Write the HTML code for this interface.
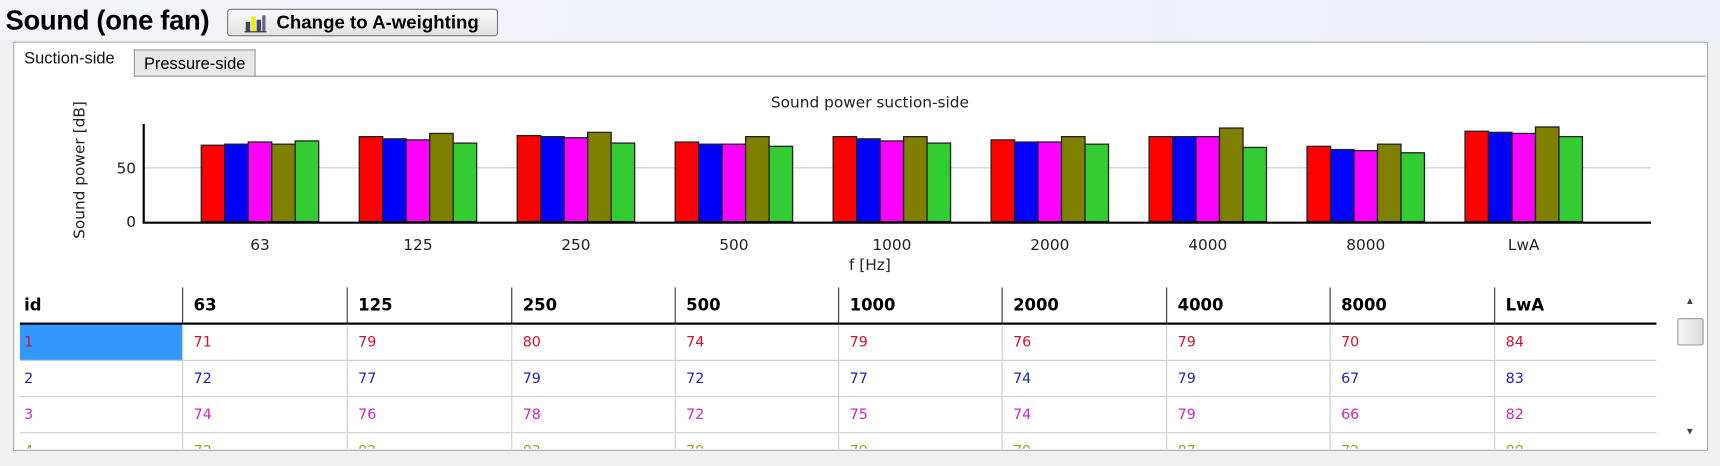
<!DOCTYPE html>
<html><head><meta charset="utf-8"><style>
html,body{margin:0;padding:0;width:1720px;height:466px;overflow:hidden;background:#f0f0f0;font-family:"Liberation Sans",sans-serif}
#w{position:absolute;left:0;top:0;width:1568px;height:425px;transform:scale(1.097);transform-origin:0 0}
.a{position:absolute}
.hdr{left:0;top:0;width:1568px;height:36px;background:linear-gradient(90deg,#f4f4f8 0%,#eceefa 100%)}
.title{left:5px;top:5px;font-size:25px;font-weight:bold;color:#000;letter-spacing:-0.3px}
.btn{left:207px;top:8px;width:245px;height:23px;border:1px solid #777;border-radius:3px;background:linear-gradient(#fafafa,#e2e2e2);font-size:17px;font-weight:bold;line-height:24px}
.panel{left:12px;top:38px;width:1543px;height:371px;background:#fff;border:1px solid #a8a8a8}
.tab1{left:22px;top:45px;font-size:15px;color:#111}
.tab2{left:122px;top:45px;width:109px;height:24px;background:#e8e8e8;border:1px solid #999;border-bottom:none;font-size:15px;line-height:26px;text-align:center}
.tline{left:122px;top:69px;width:1433px;height:1px;background:#999}
.clip{left:18px;top:262px;width:1492px;height:147px;overflow:hidden}
table{position:absolute;left:0;top:0;border-collapse:collapse;font-family:"DejaVu Sans","Liberation Sans",sans-serif;table-layout:fixed;width:1492px}
th{height:32px;text-align:left;font-size:15px;font-weight:bold;padding:0 0 0 10px;border-bottom:2px solid #000;border-left:1px solid #333}
th:first-child{border-left:none;padding-left:4px}
td{height:32px;font-size:13px;padding:0 0 0 10px;border-left:1px solid #ccc;border-bottom:1px solid #ccc}
td:first-child{border-left:none;padding-left:4px}
.r1 td{color:#d01030}.r2 td{color:#2020c0}.r3 td{color:#d020c8}.r4 td{color:#a0a020}
.sel{background:#3399ff}
</style></head><body><div id="w">
<div class="a hdr"></div>
<div class="a title">Sound (one fan)</div>
<div class="a btn"><svg width="22" height="20" style="position:absolute;left:14px;top:2px" viewBox="0 0 22 20"><rect x="2" y="9" width="4" height="9" fill="#446"/><rect x="7" y="4" width="4" height="14" fill="#ee0"/><rect x="12" y="7" width="4" height="11" fill="#446"/><rect x="17" y="3" width="3" height="15" fill="#668"/><line x1="1" y1="18" x2="21" y2="18" stroke="#333"/></svg><span style="position:absolute;left:44px;top:0">Change to A-weighting</span></div>
<div class="a panel"></div>
<div class="a tab1">Suction-side</div>
<div class="a tab2">Pressure-side</div>
<div class="a tline"></div>
<svg class="a" style="left:0;top:0" width="1568" height="260" font-family="DejaVu Sans,Liberation Sans,sans-serif">
<text x="793" y="98" font-size="14" text-anchor="middle" fill="#222">Sound power suction-side</text>
<text transform="translate(77,155) rotate(-90)" font-size="14" text-anchor="middle" fill="#222">Sound power [dB]</text>
<line x1="130" y1="153" x2="1505" y2="153" stroke="#ccc"/>
<g id="bars"></g>
<line x1="131" y1="113" x2="131" y2="203" stroke="#000" stroke-width="2"/>
<line x1="130" y1="203" x2="1505" y2="203" stroke="#000" stroke-width="2"/>
<text x="124" y="158" font-size="14" text-anchor="end" fill="#222">50</text>
<text x="124" y="207" font-size="14" text-anchor="end" fill="#222">0</text>
<g font-size="14" text-anchor="middle" fill="#222">
<text x="237" y="228">63</text><text x="381" y="228">125</text><text x="525" y="228">250</text><text x="669" y="228">500</text><text x="813" y="228">1000</text><text x="957" y="228">2000</text><text x="1101" y="228">4000</text><text x="1245" y="228">8000</text><text x="1389" y="228">LwA</text>
<text x="793" y="246">f [Hz]</text></g>
</svg>
<div class="a clip"><table>
<colgroup><col style="width:148px"><col style="width:150px"><col style="width:150px"><col style="width:149px"><col style="width:149px"><col style="width:149px"><col style="width:150px"><col style="width:149px"><col style="width:150px"><col style="width:148px"></colgroup>
<tr><th>id</th><th>63</th><th>125</th><th>250</th><th>500</th><th>1000</th><th>2000</th><th>4000</th><th>8000</th><th>LwA</th></tr>
<tr class="r1"><td class="sel">1</td><td>71</td><td>79</td><td>80</td><td>74</td><td>79</td><td>76</td><td>79</td><td>70</td><td>84</td></tr>
<tr class="r2"><td>2</td><td>72</td><td>77</td><td>79</td><td>72</td><td>77</td><td>74</td><td>79</td><td>67</td><td>83</td></tr>
<tr class="r3"><td>3</td><td>74</td><td>76</td><td>78</td><td>72</td><td>75</td><td>74</td><td>79</td><td>66</td><td>82</td></tr>
<tr class="r4"><td>4</td><td>72</td><td>82</td><td>83</td><td>79</td><td>79</td><td>79</td><td>87</td><td>72</td><td>88</td></tr>
</table></div>
<div class="a" style="left:1529px;top:290px;width:22px;height:23px;border:1px solid #999;border-radius:2px;background:linear-gradient(90deg,#f4f4f4,#dcdcdc)"></div>
<div class="a" style="left:1536px;top:269px;font-size:9px;color:#444">▲</div>
<div class="a" style="left:1536px;top:388px;font-size:9px;color:#444">▼</div>
</div>
<script>
var d=[[71,79,80,74,79,76,79,70,84],[72,77,79,72,77,74,79,67,83],[74,76,78,72,75,74,79,66,82],[72,82,83,79,79,79,87,72,88],[75,73,73,70,73,72,69,64,79]];
var c=["#ff0000","#0000ff","#ff00ff","#808000","#33cc33"],s="";
for(var i=0;i<9;i++){var x0=237+144*i-53.5;for(var k=0;k<5;k++){var h=d[k][i]*0.98;s+='<rect x="'+(x0+k*21.4)+'" y="'+(202-h)+'" width="21.4" height="'+h+'" fill="'+c[k]+'" stroke="#222" stroke-width="1.2"/>';}}
document.getElementById('bars').innerHTML=s;
</script>
</body></html>
